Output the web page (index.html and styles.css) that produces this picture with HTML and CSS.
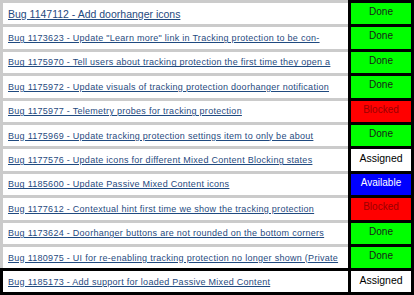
FILE: index.html
```html
<!DOCTYPE html>
<html>
<head>
<meta charset="utf-8">
<link rel="stylesheet" href="styles.css">
</head>
<body>
<div class="sheet">
  <div class="row first"><div class="bug"><a href="#">Bug 1147112 - Add doorhanger icons</a></div><div class="status done">Done</div></div>
  <div class="row"><div class="bug"><a href="#">Bug 1173623 - Update "Learn more" link in Tracking protection to be con-</a></div><div class="status done">Done</div></div>
  <div class="row"><div class="bug"><a href="#">Bug 1175970 - Tell users about tracking protection the first time they open a</a></div><div class="status done">Done</div></div>
  <div class="row"><div class="bug"><a href="#">Bug 1175972 - Update visuals of tracking protection doorhanger notification</a></div><div class="status done">Done</div></div>
  <div class="row"><div class="bug"><a href="#">Bug 1175977 - Telemetry probes for tracking protection</a></div><div class="status blocked">Blocked</div></div>
  <div class="row"><div class="bug"><a href="#">Bug 1175969 - Update tracking protection settings item to only be about</a></div><div class="status done">Done</div></div>
  <div class="row"><div class="bug"><a href="#">Bug 1177576 - Update icons for different Mixed Content Blocking states</a></div><div class="status assigned">Assigned</div></div>
  <div class="row"><div class="bug"><a href="#">Bug 1185600 - Update Passive Mixed Content icons</a></div><div class="status available">Available</div></div>
  <div class="row"><div class="bug"><a href="#">Bug 1177612 - Contextual hint first time we show the tracking protection</a></div><div class="status blocked">Blocked</div></div>
  <div class="row"><div class="bug"><a href="#">Bug 1173624 - Doorhanger buttons are not rounded on the bottom corners</a></div><div class="status done">Done</div></div>
  <div class="row"><div class="bug"><a href="#">Bug 1180975 - UI for re-enabling tracking protection no longer shown (Private</a></div><div class="status done">Done</div></div>
  <div class="row last"><div class="bug"><a href="#">Bug 1185173 - Add support for loaded Passive Mixed Content</a></div><div class="status assigned">Assigned</div></div>
</div>
</body>
</html>
```

FILE: styles.css
```css
html, body {
  margin: 0;
  padding: 0;
  background: #ffffff;
}
.sheet {
  width: 414px;
  height: 295px;
  display: grid;
  grid-template-rows: repeat(11, 24.4px) 1fr;
  background: #cbcbcb;
  overflow: hidden;
}
.row {
  display: grid;
  grid-template-columns: 348px 1fr;
  min-height: 0;
}
.bug {
  border-top: 3px solid #cbcbcb;
  border-left: 3px solid #cbcbcb;
  background: #ffffff;
  padding-left: 5px;
  display: flex;
  align-items: center;
  white-space: nowrap;
  overflow: hidden;
  font-family: "Liberation Sans", Arial, sans-serif;
  font-size: 9px;
  letter-spacing: 0.28px;
}
.bug a {
  color: #1f4a80;
  text-decoration: underline;
}
.first .bug {
  font-size: 10.5px;
  letter-spacing: 0;
}
.status {
  border: 3px solid #000;
  border-bottom: 0;
  display: flex;
  justify-content: center;
  align-items: flex-start;
  padding-top: 3px;
  font-family: "Liberation Sans", Arial, sans-serif;
  font-size: 10px;
  color: #1a1a1a;
}
.done { background: #00ff00; }
.blocked { background: #ff0000; color: #9a0000; }
.available { background: #0000ff; color: #ffffff; }
.assigned { background: #ffffff; color: #000; font-size: 10.5px; }
.last .bug {
  border: 3px solid #000;
  border-right: 0;
}
.last .status {
  border-bottom: 3px solid #000;
}
```
